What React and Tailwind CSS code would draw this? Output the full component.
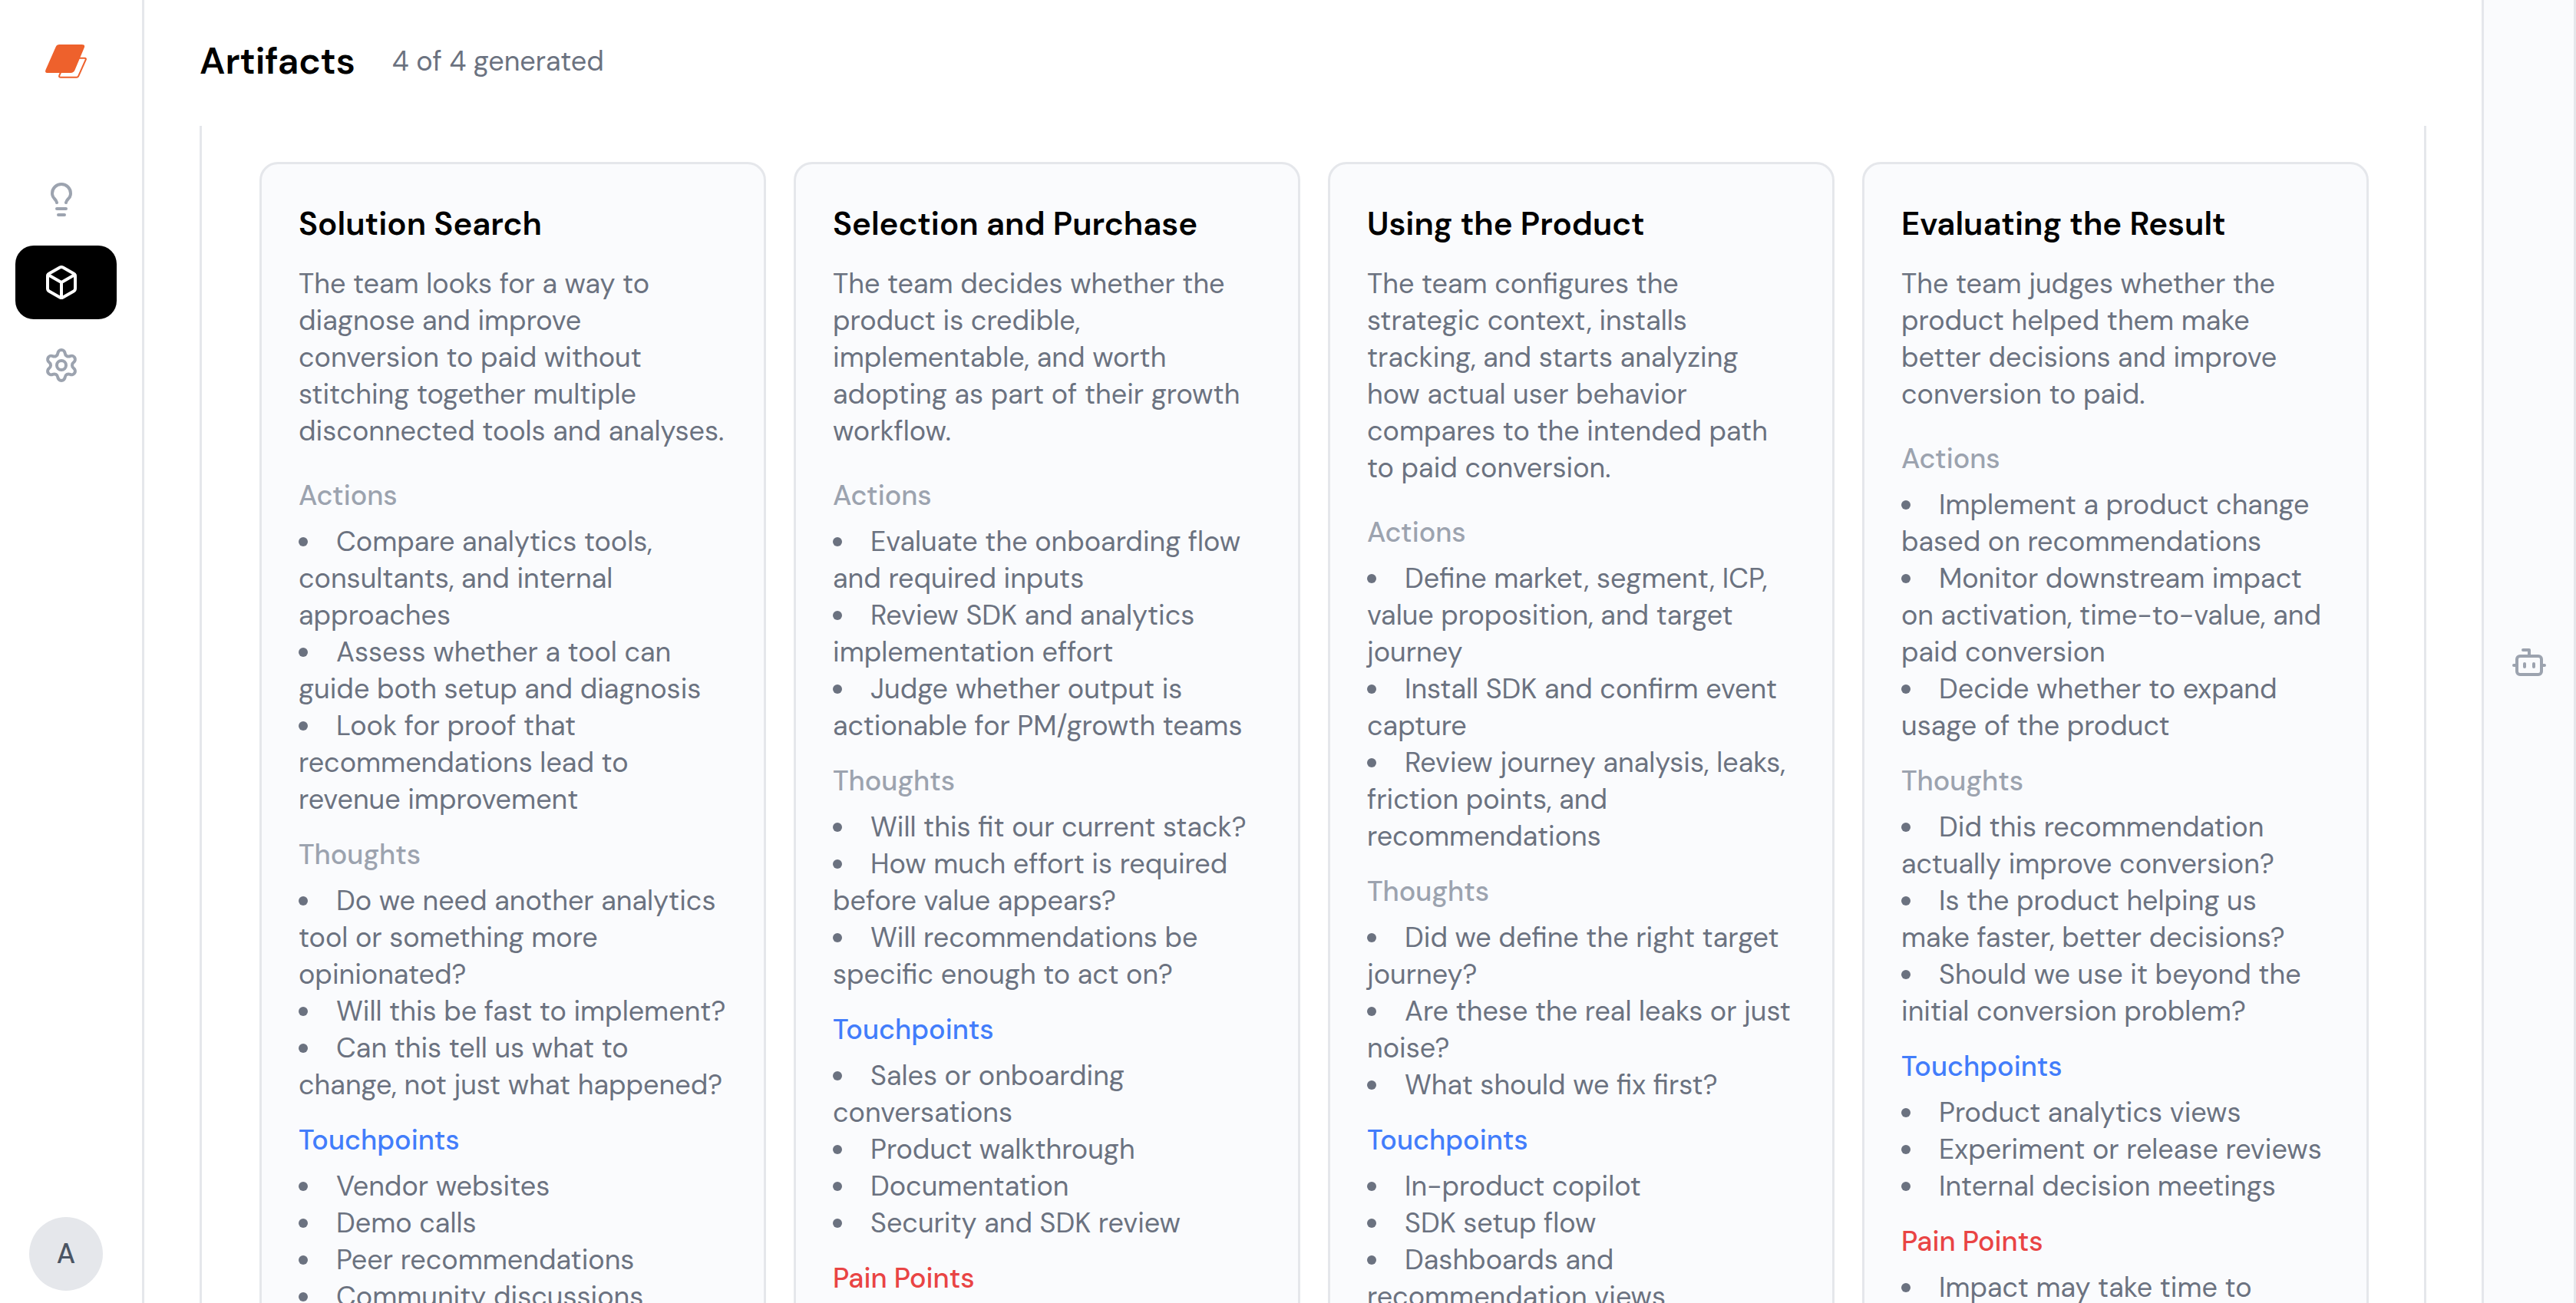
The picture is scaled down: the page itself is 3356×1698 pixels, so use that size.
import { Bot, Box, Lightbulb, Settings } from "lucide-react";

const NAV_ITEMS = [
  { label: "Ideas", icon: Lightbulb, active: false },
  { label: "Artifacts", icon: Box, active: true },
  { label: "Settings", icon: Settings, active: false },
];

const STAGES = [
  {
    title: "Solution Search",
    description:
      "The team looks for a way to diagnose and improve conversion to paid without stitching together multiple disconnected tools and analyses.",
    sections: [
      {
        heading: "Actions",
        items: [
          "Compare analytics tools, consultants, and internal approaches",
          "Assess whether a tool can guide both setup and diagnosis",
          "Look for proof that recommendations lead to revenue improvement",
        ],
      },
      {
        heading: "Thoughts",
        items: [
          "Do we need another analytics tool or something more opinionated?",
          "Will this be fast to implement?",
          "Can this tell us what to change, not just what happened?",
        ],
      },
      {
        heading: "Touchpoints",
        items: ["Vendor websites", "Demo calls", "Peer recommendations", "Community discussions"],
      },
    ],
  },
  {
    title: "Selection and Purchase",
    description:
      "The team decides whether the product is credible, implementable, and worth adopting as part of their growth workflow.",
    sections: [
      {
        heading: "Actions",
        items: [
          "Evaluate the onboarding flow and required inputs",
          "Review SDK and analytics implementation effort",
          "Judge whether output is actionable for PM/growth teams",
        ],
      },
      {
        heading: "Thoughts",
        items: [
          "Will this fit our current stack?",
          "How much effort is required before value appears?",
          "Will recommendations be specific enough to act on?",
        ],
      },
      {
        heading: "Touchpoints",
        items: [
          "Sales or onboarding conversations",
          "Product walkthrough",
          "Documentation",
          "Security and SDK review",
        ],
      },
      { heading: "Pain Points", items: [] },
    ],
  },
  {
    title: "Using the Product",
    description:
      "The team configures the strategic context, installs tracking, and starts analyzing how actual user behavior compares to the intended path to paid conversion.",
    sections: [
      {
        heading: "Actions",
        items: [
          "Define market, segment, ICP, value proposition, and target journey",
          "Install SDK and confirm event capture",
          "Review journey analysis, leaks, friction points, and recommendations",
        ],
      },
      {
        heading: "Thoughts",
        items: [
          "Did we define the right target journey?",
          "Are these the real leaks or just noise?",
          "What should we fix first?",
        ],
      },
      {
        heading: "Touchpoints",
        items: ["In-product copilot", "SDK setup flow", "Dashboards and recommendation views"],
      },
    ],
  },
  {
    title: "Evaluating the Result",
    description:
      "The team judges whether the product helped them make better decisions and improve conversion to paid.",
    sections: [
      {
        heading: "Actions",
        items: [
          "Implement a product change based on recommendations",
          "Monitor downstream impact on activation, time-to-value, and paid conversion",
          "Decide whether to expand usage of the product",
        ],
      },
      {
        heading: "Thoughts",
        items: [
          "Did this recommendation actually improve conversion?",
          "Is the product helping us make faster, better decisions?",
          "Should we use it beyond the initial conversion problem?",
        ],
      },
      {
        heading: "Touchpoints",
        items: [
          "Product analytics views",
          "Experiment or release reviews",
          "Internal decision meetings",
        ],
      },
      { heading: "Pain Points", items: ["Impact may take time to"] },
    ],
  },
];

const HEADING_COLORS = {
  Actions: "text-[#9ca3af]",
  Thoughts: "text-[#9ca3af]",
  Touchpoints: "text-[#427dfb]",
  "Pain Points": "text-[#e94444]",
};

function Logo() {
  return (
    <svg width="54" height="44" viewBox="0 0 54 44" fill="none" aria-hidden="true">
      <path
        d="M42.5 17.8H51.2Q53.6 17.8 52.6 20L43.2 41.2Q42.5 42.8 40.8 42.8H20.2Q17.4 42.8 18.4 40.2L20 36.5"
        stroke="#ee612c"
        strokeWidth="2"
        strokeLinejoin="round"
      />
      <path
        d="M18.5 0H47.5Q52.6 0 50.6 4.6L38.4 33.6Q36.9 37 33.2 37H3.2Q-1.2 37 0.6 32.8L13.6 3.2Q15 0 18.5 0Z"
        fill="#ee612c"
      />
    </svg>
  );
}

function Sidebar() {
  return (
    <aside className="flex w-[188px] shrink-0 flex-col border-r-3 border-[#e5e7eb] bg-white">
      <a href="#home" aria-label="Home" className="mt-[58px] ml-[59px] self-start">
        <Logo />
      </a>
      <nav aria-label="Main" className="mt-[110px] flex flex-col gap-3 pr-[33px] pl-5">
        {NAV_ITEMS.map(({ label, icon: Icon, active }) => (
          <a
            key={label}
            href={`#${label.toLowerCase()}`}
            aria-label={label}
            aria-current={active ? "page" : undefined}
            className={`flex h-24 items-center rounded-3xl pl-9 ${
              active ? "bg-black text-white" : "text-[#9ca3af]"
            }`}
          >
            <Icon size={48} />
          </a>
        ))}
      </nav>
      <button
        type="button"
        aria-label="Account"
        className="mt-auto mb-4 ml-[38px] flex size-24 items-center justify-center rounded-full bg-[#e5e7eb] text-[36px] font-medium text-[#4b5563]"
      >
        A
      </button>
    </aside>
  );
}

function Section({ heading, items }) {
  return (
    <section className="flex flex-col gap-3">
      <h3 className={`font-medium ${HEADING_COLORS[heading]}`}>{heading}</h3>
      {items.length > 0 && (
        <ul>
          {items.map((item) => (
            <li
              key={item}
              className="before:mr-[37px] before:mb-[6px] before:inline-block before:size-3 before:rounded-full before:bg-current"
            >
              {item}
            </li>
          ))}
        </ul>
      )}
    </section>
  );
}

function StageCard({ title, description, sections }) {
  return (
    <article className="rounded-3xl border-3 border-[#e5e7eb] bg-[#fafbfd] p-12 text-[36px] leading-[48px] text-[#6b7280]">
      <h2 className="text-[42px] leading-[60px] font-semibold text-black">{title}</h2>
      <p className="mt-6">{description}</p>
      <div className="mt-9 flex flex-col gap-6">
        {sections.map((section) => (
          <Section key={section.heading} {...section} />
        ))}
      </div>
    </article>
  );
}

export default function App() {
  return (
    <div className="flex h-screen overflow-hidden bg-white font-['DM_Sans','Inter',sans-serif]">
      <Sidebar />
      <main className="flex min-w-0 flex-1 flex-col px-[72px]">
        <header className="flex h-[164px] shrink-0 items-center gap-12 pb-1">
          <h1 className="text-[48px] leading-[72px] font-semibold text-black">Artifacts</h1>
          <p className="text-[36px] leading-[48px] text-[#6b7280]">4 of 4 generated</p>
        </header>
        <div className="min-h-0 flex-1 overflow-hidden border-x-3 border-[#e5e7eb] pt-[47px] pr-[72px] pl-[75px]">
          <div className="grid grid-cols-4 gap-9">
            {STAGES.map((stage) => (
              <StageCard key={stage.title} {...stage} />
            ))}
          </div>
        </div>
      </main>
      <aside className="flex w-[123px] shrink-0 items-center justify-center border-x-3 border-[#e5e7eb] bg-[#fafbfd] pt-7">
        <button type="button" aria-label="Open assistant" className="text-[#9ca3af]">
          <Bot size={48} />
        </button>
      </aside>
    </div>
  );
}
